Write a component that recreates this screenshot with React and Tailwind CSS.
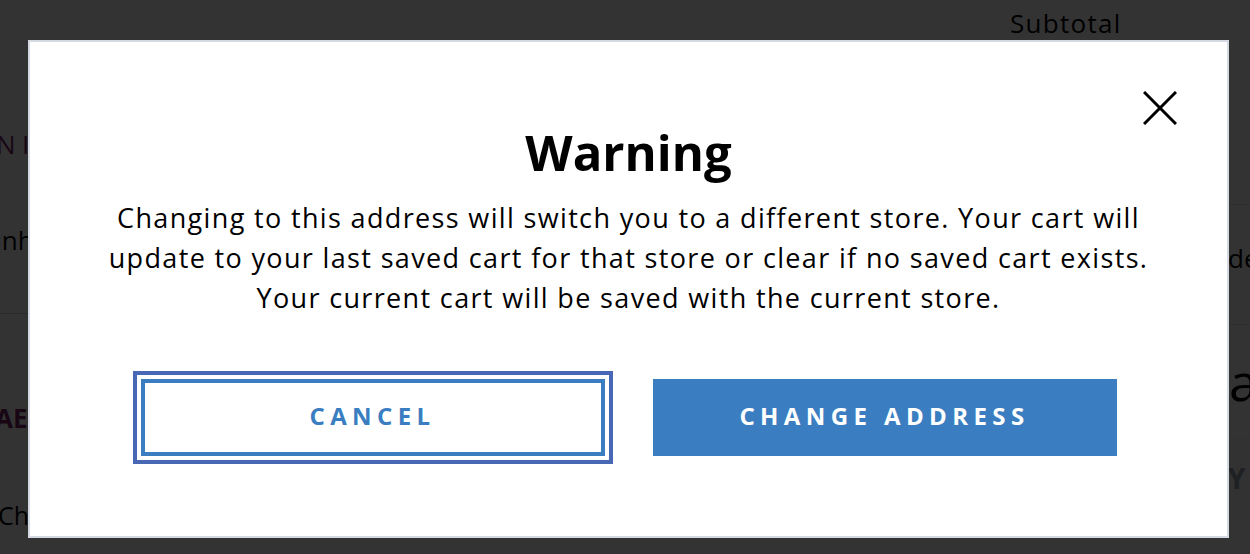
import React from 'react';

const CloseIcon = () => (
  <svg width="34" height="34" viewBox="0 0 34 34" fill="none" stroke="#000" strokeWidth="3">
    <line x1="1" y1="1" x2="33" y2="33" />
    <line x1="33" y1="1" x2="1" y2="33" />
  </svg>
);

export default function App() {
  return (
    <div className="relative w-[1250px] h-[554px] overflow-hidden bg-white font-['Open_Sans',sans-serif]">
      {/* page behind the dialog */}
      <div className="flex h-full">
        <div className="w-[40px] shrink-0 flex flex-col text-[26px] whitespace-nowrap">
          <div className="h-[126px]" />
          <div className="-ml-[4px] text-[#7a1f6a] tracking-[0.25em] leading-[36px]">NI</div>
          <div className="h-[60px]" />
          <div className="-ml-[43px] text-black leading-[36px]">Thanh</div>
          <div className="h-[56px] border-b border-gray-300" />
          <div className="h-[86px]" />
          <div className="-ml-[5px] font-bold text-[#7a1f6a] leading-[36px]">AEC</div>
          <div className="h-[61px]" />
          <div className="-ml-[2px] text-[25px] text-black leading-[36px]">China</div>
        </div>
        <div className="flex-1 relative">
          <div className="absolute left-[970px] top-[4px] text-[26px] tracking-[0.05em] text-black">Subtotal</div>
        </div>
        <div className="w-[22px] shrink-0 flex flex-col whitespace-nowrap">
          <div className="h-[205px] border-b border-gray-200" />
          <div className="h-[120px] border-b border-gray-200 flex items-center pb-[12px] text-[26px] text-black">de</div>
          <div className="h-[112px] flex items-center pl-[1px] text-[52px] text-black">a</div>
          <div className="h-[82px] bg-gray-50 flex items-center text-[28px] font-bold text-gray-400">Y</div>
        </div>
      </div>

      {/* overlay */}
      <div className="absolute inset-0 bg-black/80" />

      {/* dialog */}
      <div className="absolute left-[28px] top-[40px] w-[1201px] h-[498px] bg-white border-2 border-[#d5d9e2] flex flex-col items-center">
        <button className="absolute right-[50px] top-[49px]">
          <CloseIcon />
        </button>
        <h2 className="mt-[80px] text-[49px] leading-[60px] font-bold text-black">Warning</h2>
        <p className="mt-[16px] text-center text-[27px] tracking-[0.05em] leading-[40px] text-black whitespace-nowrap">
          Changing to this address will switch you to a different store. Your cart will
          <br />
          update to your last saved cart for that store or clear if no saved cart exists.
          <br />
          Your current cart will be saved with the current store.
        </p>
        <div className="mt-[61px] flex gap-[48px]">
          <button className="w-[464px] h-[77px] pb-[4px] bg-white border-4 border-[#3a7ec1] outline-4 outline-offset-4 outline-[#4868b6] text-[#3a7ec1] text-[24px] font-bold tracking-[0.225em] uppercase">
            Cancel
          </button>
          <button className="w-[464px] h-[77px] pb-[4px] bg-[#3a7ec1] text-white text-[24px] font-bold tracking-[0.225em] uppercase">
            Change Address
          </button>
        </div>
      </div>
    </div>
  );
}
